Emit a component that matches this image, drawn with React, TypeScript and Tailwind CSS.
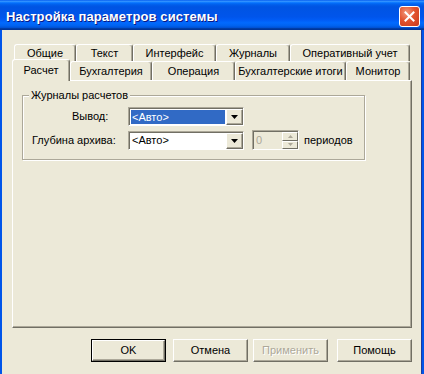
import React from "react";

const row1 = [
  { label: "Общие", w: "w-[62px]" },
  { label: "Текст", w: "w-[57px]" },
  { label: "Интерфейс", w: "w-[83px]" },
  { label: "Журналы", w: "w-[74px]" },
  { label: "Оперативный учет", w: "w-[120px]" },
];

const row2 = [
  { label: "Бухгалтерия", w: "w-[82px]" },
  { label: "Операция", w: "w-[83px]" },
  { label: "Бухгалтерские итоги", w: "w-[111px]" },
  { label: "Монитор", w: "w-[64px]" },
];

const Tab = ({ label, w, h }: { label: string; w: string; h: string }) => (
  <div
    className={`${w} ${h} flex items-center justify-center bg-[#ECE9D8] border-l border-t border-r border-l-white border-t-white border-r-[#716F64] rounded-t-[3px] shadow-[inset_-1px_0_0_#ACA899]`}
  >
    {label}
  </div>
);

const DropArrow = () => (
  <div className="w-[17px] h-full flex items-center justify-center bg-[#ECE9D8] border-l border-t border-r border-b border-l-white border-t-white border-r-[#716F64] border-b-[#716F64] shadow-[inset_-1px_-1px_0_#ACA899]">
    <svg width="7" height="4" viewBox="0 0 7 4">
      <path d="M0 0h7L3.5 4z" fill="#000" />
    </svg>
  </div>
);

const Combo = ({ selected }: { selected?: boolean }) => (
  <div className="w-[116px] h-[19px] flex border-l border-t border-r border-b border-l-[#ACA899] border-t-[#ACA899] border-r-white border-b-white">
    <div className="flex-1 flex border-l border-t border-l-[#716F64] border-t-[#716F64] bg-white">
      <div className="flex-1 p-[1px]">
        <div
          className={`h-full flex items-center pl-[1px] ${
            selected ? "bg-[#316AC5] text-white" : "bg-white text-black"
          }`}
        >
          &lt;Авто&gt;
        </div>
      </div>
      <DropArrow />
    </div>
  </div>
);

const Button = ({
  label,
  ml,
  def,
  disabled,
}: {
  label: string;
  ml: string;
  def?: boolean;
  disabled?: boolean;
}) => (
  <div
    className={`${ml} w-[75px] h-[23px] ${def ? "border border-black" : ""}`}
  >
    <div className="w-full h-full flex items-center justify-center bg-[#ECE9D8] border-l border-t border-r border-b border-l-white border-t-white border-r-[#716F64] border-b-[#716F64] shadow-[inset_-1px_-1px_0_#ACA899]">
      <span
        className={
          disabled ? "text-[#ACA899] [text-shadow:1px_1px_0_#fff]" : "text-black"
        }
      >
        {label}
      </span>
    </div>
  </div>
);

export default function App() {
  return (
    <div className="w-[424px] h-[374px] bg-[#ECE9D8] flex flex-col overflow-hidden font-['Liberation_Sans',Arial,sans-serif] text-[11px] text-black">
      {/* title bar */}
      <div className="h-[30px] shrink-0 flex items-center pt-[3px] pl-[6px] pr-[4px] bg-[linear-gradient(to_bottom,#0058EE_0%,#3593FF_4%,#288EFF_6%,#127DFF_8%,#036FFC_10%,#0262EE_14%,#0057E5_20%,#0054E3_24%,#0055EB_56%,#005BF5_66%,#026AFE_76%,#0062EF_86%,#0052D6_92%,#0040AB_94%,#003092_100%)]">
        <span className="flex-1 text-white font-bold text-[13px] tracking-[0.1px] [text-shadow:1px_1px_0_#0A1883]">
          Настройка параметров системы
        </span>
        <div className="w-[21px] h-[21px] rounded-[3px] border border-white bg-[radial-gradient(circle_at_35%_30%,#F29A7E_0%,#E2532F_45%,#C8391B_100%)] flex items-center justify-center">
          <svg width="11" height="11" viewBox="0 0 11 11">
            <path d="M1.5 1.5l8 8M9.5 1.5l-8 8" stroke="#fff" strokeWidth="2" strokeLinecap="square" />
          </svg>
        </div>
      </div>

      {/* body */}
      <div className="flex-1 flex">
        <div className="w-[2px] bg-[#0055EA]" />
        <div className="flex-1 flex flex-col pl-[10px] pt-[14px]">
          {/* tab rows */}
          <div className="flex ml-[2px]">
            {row1.map((t) => (
              <Tab key={t.label} label={t.label} w={t.w} h="h-[17px]" />
            ))}
          </div>
          <div className="flex items-end h-[19px] relative z-10">
            <div className="w-[58px] h-[22px] relative top-[1px] flex items-center justify-center pb-[1px] bg-[#ECE9D8] border-l border-t border-r border-l-white border-t-white border-r-[#716F64] rounded-t-[3px] shadow-[inset_-1px_0_0_#ACA899]">
              Расчет
            </div>
            {row2.map((t) => (
              <Tab key={t.label} label={t.label} w={t.w} h="h-[19px]" />
            ))}
          </div>

          {/* panel */}
          <div className="w-[400px] h-[248px] border-l border-t border-r border-b border-l-white border-t-white border-r-[#716F64] border-b-[#716F64] shadow-[inset_-1px_-1px_0_#ACA899] pl-[9px] pt-[14px]">
            <div className="relative w-[343px] h-[65px] border border-[#ACA899] shadow-[inset_1px_1px_0_#fff,1px_1px_0_#fff] pt-[11px]">
              <span className="absolute -top-[8px] left-[6px] px-[2px] bg-[#ECE9D8] leading-[14px]">
                Журналы расчетов
              </span>
              <div className="flex items-center">
                <div className="w-[105px] pl-[49px]">Вывод:</div>
                <Combo selected />
              </div>
              <div className="flex items-center mt-[4px]">
                <div className="w-[105px] pl-[9px]">Глубина архива:</div>
                <Combo />
                <div className="ml-[8px] w-[47px] h-[20px] flex border-l border-t border-r border-b border-l-[#ACA899] border-t-[#ACA899] border-r-white border-b-white">
                  <div className="flex-1 flex border-l border-t border-l-[#716F64] border-t-[#716F64] bg-[#ECE9D8]">
                    <div className="flex-1 flex items-center pl-[2px] text-[#ACA899]">0</div>
                    <div className="w-[16px] flex flex-col">
                      <div className="flex-1 flex items-center justify-center border-l border-t border-r border-b border-l-white border-t-white border-r-[#716F64] border-b-[#716F64]">
                        <svg width="5" height="3" viewBox="0 0 5 3">
                          <path d="M2.5 0L5 3H0z" fill="#ACA899" />
                        </svg>
                      </div>
                      <div className="flex-1 flex items-center justify-center border-l border-t border-r border-b border-l-white border-t-white border-r-[#716F64] border-b-[#716F64]">
                        <svg width="5" height="3" viewBox="0 0 5 3">
                          <path d="M0 0h5L2.5 3z" fill="#ACA899" />
                        </svg>
                      </div>
                    </div>
                  </div>
                </div>
                <span className="ml-[5px]">периодов</span>
              </div>
            </div>
          </div>

          {/* buttons */}
          <div className="flex mt-[11px]">
            <Button label="OK" ml="ml-[79px]" def />
            <Button label="Отмена" ml="ml-[7px]" />
            <Button label="Применить" ml="ml-[5px]" disabled />
            <Button label="Помощь" ml="ml-[9px]" />
          </div>
        </div>
        <div className="w-[1px] bg-[#1A3A9E]" />
        <div className="w-[2px] bg-[#0055EA]" />
      </div>
    </div>
  );
}
